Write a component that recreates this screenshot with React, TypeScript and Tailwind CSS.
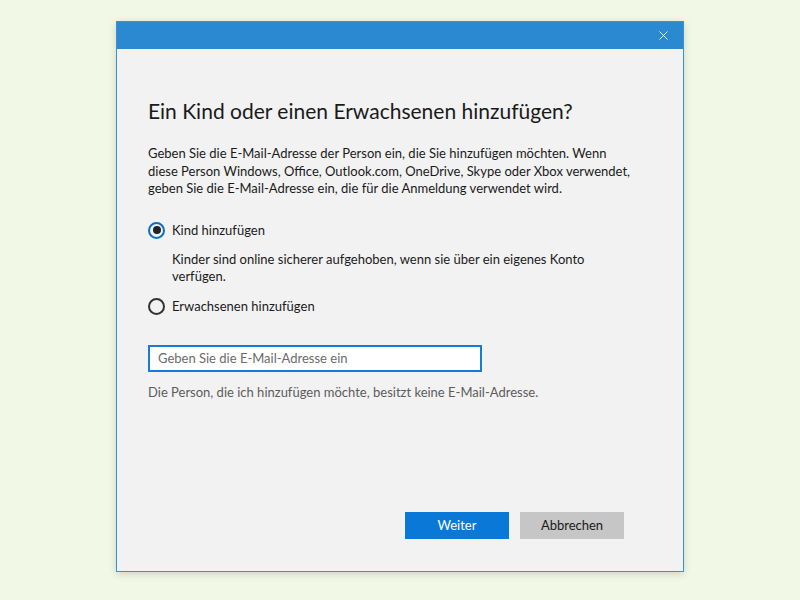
import { X } from "lucide-react";

const font = { fontFamily: 'Lato, "Noto Sans", sans-serif' };

const Radio = ({ checked, label }: { checked?: boolean; label: string }) => (
  <div className="flex items-center gap-[7px]">
    <span
      className={`flex h-[17px] w-[17px] items-center justify-center rounded-full border-2 ${
        checked ? "border-[#0a6fc2]" : "border-[#333]"
      }`}
    >
      {checked && <span className="h-[8px] w-[8px] rounded-full bg-[#222]" />}
    </span>
    <span className="text-[13px] text-[#1a1a1a]">{label}</span>
  </div>
);

export default function App() {
  return (
    <div className="min-h-[600px] w-[800px] bg-[#f1f8e6] pl-[116px] pt-[21px]" style={font}>
      <div className="flex h-[551px] w-[568px] flex-col border border-[#3a92d6] bg-[#f2f2f2] shadow-[0_2px_8px_rgba(0,0,0,0.15)]">
        {/* Title bar */}
        <div className="flex h-[27px] items-center justify-end bg-[#2a89d0] pr-[12px]">
          <X className="h-[15px] w-[15px] text-white" strokeWidth={1.3} />
        </div>

        {/* Content */}
        <div className="flex flex-1 flex-col px-[31px] pt-[48px]">
          <h1 className="text-[21px] leading-[28px] text-[#1a1a1a]">
            Ein Kind oder einen Erwachsenen hinzufügen?
          </h1>
          <p className="mt-[20px] text-[13px] leading-[17.5px] text-[#1a1a1a]">
            Geben Sie die E-Mail-Adresse der Person ein, die Sie hinzufügen möchten. Wenn
            <br />
            diese Person Windows, Office, Outlook.com, OneDrive, Skype oder Xbox verwendet,
            <br />
            geben Sie die E-Mail-Adresse ein, die für die Anmeldung verwendet wird.
          </p>

          <div className="mt-[23px]">
            <Radio checked label="Kind hinzufügen" />
          </div>
          <p className="mt-[11px] pl-[24px] text-[13px] leading-[17px] text-[#1a1a1a]">
            Kinder sind online sicherer aufgehoben, wenn sie über ein eigenes Konto
            <br />
            verfügen.
          </p>
          <div className="mt-[12px]">
            <Radio label="Erwachsenen hinzufügen" />
          </div>

          <input
            className="mt-[28px] h-[27px] w-[334px] border-2 border-[#1a7bd6] bg-white px-[8px] text-[13px] text-[#1a1a1a] outline-none placeholder:text-[#6b6b6b]"
            placeholder="Geben Sie die E-Mail-Adresse ein"
          />
          <p className="mt-[12px] text-[13px] leading-[17px] text-[#5c5c5c]">
            Die Person, die ich hinzufügen möchte, besitzt keine E-Mail-Adresse.
          </p>

          <div className="flex-1" />

          {/* Buttons */}
          <div className="mb-[32px] mr-[28px] flex justify-end gap-[11px]">
            <button className="h-[27px] w-[104px] bg-[#0a78d7] text-[13px] text-white">Weiter</button>
            <button className="h-[27px] w-[104px] bg-[#c6c6c6] text-[13px] text-[#1a1a1a]">Abbrechen</button>
          </div>
        </div>
      </div>
    </div>
  );
}
